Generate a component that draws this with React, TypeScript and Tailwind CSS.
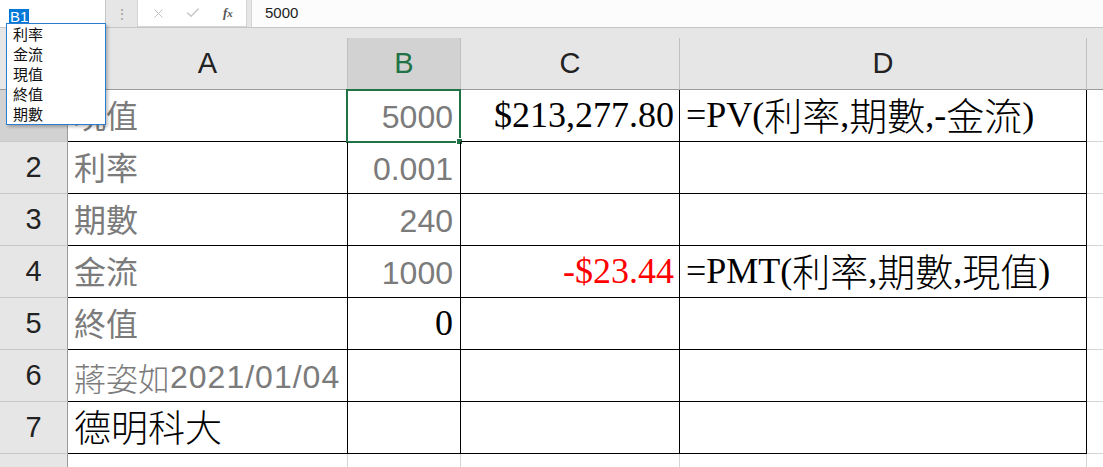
import { X, Check } from 'lucide-react';

/* ─── Sheet data ───────────────────────────────────────────── */

const SANS = "font-['Liberation_Sans','Noto_Sans_CJK_TC',sans-serif]";
const SERIF = "font-['Liberation_Serif','Noto_Sans_CJK_TC',serif]";
const CJK = "font-['Noto_Sans_CJK_TC',sans-serif] font-light";

const columns = ['A', 'B', 'C', 'D'];
const selectedCol = 'B';
const selectedRow = 1;

// 新細明體-ish CJK inside a Times line
function Cj({ children }: { children: React.ReactNode }) {
  return <span className={`${CJK} text-[38px]`}>{children}</span>;
}

type Cell = {
  content?: React.ReactNode;
  align?: 'left' | 'right';
  className?: string;
};

const grayText = `${SANS} text-[32px] text-[#7b7b7b]`;

const rows: Cell[][] = [
  [
    { content: '現值', className: grayText },
    { content: '5000', align: 'right', className: grayText },
    { content: '$213,277.80', align: 'right', className: `${SERIF} text-[36px] text-black` },
    {
      content: (
        <>
          =PV(<Cj>利率</Cj>,<Cj>期數</Cj>,-<Cj>金流</Cj>)
        </>
      ),
      className: `${SERIF} text-[36px] text-black`,
    },
  ],
  [
    { content: '利率', className: grayText },
    { content: '0.001', align: 'right', className: grayText },
    {},
    {},
  ],
  [
    { content: '期數', className: grayText },
    { content: '240', align: 'right', className: grayText },
    {},
    {},
  ],
  [
    { content: '金流', className: grayText },
    { content: '1000', align: 'right', className: grayText },
    { content: '-$23.44', align: 'right', className: `${SERIF} text-[36px] text-[#ff0000]` },
    {
      content: (
        <>
          =PMT(<Cj>利率</Cj>,<Cj>期數</Cj>,<Cj>現值</Cj>)
        </>
      ),
      className: `${SERIF} text-[36px] text-black`,
    },
  ],
  [
    { content: '終值', className: grayText },
    { content: '0', align: 'right', className: `${SERIF} text-[36px] text-black` },
    {},
    {},
  ],
  [
    {
      content: (
        <>
          <span className={`${CJK} text-[32px]`}>蔣姿如</span>
          <span className="tracking-[1px]">2021/01/04</span>
        </>
      ),
      className: grayText,
    },
    {},
    {},
    {},
  ],
  [
    { content: <span className={`${CJK} text-[37px]`}>德明科大</span>, className: 'text-black' },
    {},
    {},
    {},
  ],
];

/* ─── Formula bar ──────────────────────────────────────────── */

function FormulaBar() {
  return (
    <div className="flex h-[28px] bg-[#e6e6e6] border-b border-[#c6c6c6]">
      <div className="w-[106px] bg-white border-r border-[#c6c6c6] pl-[9px] pt-[4px]">
        <span className={`${SANS} bg-[#0078d7] text-white text-[15px] leading-[16px] inline-block px-[1px]`}>B1</span>
      </div>
      <div className="w-[31px] flex items-center justify-center text-[#a0a0a0] text-[14px]">⋮</div>
      <div className="w-[110px] bg-white border border-[#d4d4d4] border-t-0 flex items-center">
        <X size={15} strokeWidth={1.5} className="ml-[13px] text-[#bdbdbd]" />
        <Check size={16} strokeWidth={2} className="ml-[19px] text-[#c4c4c4]" />
        <span className="ml-[22px] font-['Liberation_Serif',serif] italic text-[13px] text-[#555] font-bold">
          f<span className="text-[11px]">x</span>
        </span>
      </div>
      <div className="flex-1 ml-[4px] bg-[#fcfcfc] border-l border-[#d4d4d4] pl-[13px] flex items-center">
        <span className={`${SANS} text-[15px] text-[#222]`}>5000</span>
      </div>
    </div>
  );
}

/* ─── Grid ─────────────────────────────────────────────────── */

function Sheet() {
  return (
    <div className="grid grid-cols-[68px_280px_113px_219px_407px_1fr] auto-rows-[52px]">
      {/* column headers */}
      <div className="bg-[#e6e6e6] border-r border-b border-[#9b9b9b]" />
      {columns.map((c) => (
        <div
          key={c}
          className={`${SANS} flex items-center justify-center text-[29px] border-r border-b border-r-[#c0c0c0] border-b-[#9b9b9b] ${
            c === selectedCol ? 'bg-[#d2d2d2] text-[#217346]' : 'bg-[#e6e6e6] text-[#222]'
          }`}
        >
          {c}
        </div>
      ))}
      <div className="bg-[#e6e6e6] border-b border-[#9b9b9b]" />

      {rows.map((row, ri) => {
        const rowNum = ri + 1;
        return (
          <div key={rowNum} className="contents">
            <div
              className={`${SANS} flex items-center justify-center text-[29px] border-r border-b border-r-[#9b9b9b] border-b-[#c8c8c8] ${
                rowNum === selectedRow ? 'bg-[#d2d2d2] text-[#217346]' : 'bg-[#e6e6e6] text-[#222]'
              }`}
            >
              {rowNum}
            </div>
            {row.map((cell, ci) => {
              const isSel = rowNum === selectedRow && columns[ci] === selectedCol;
              const padRight = columns[ci] === 'C' ? 'justify-end pr-[5px]' : 'justify-end pr-[7px]';
              return (
                <div
                  key={ci}
                  className={`relative flex items-end whitespace-nowrap leading-none border-r border-b border-black pb-[8px] ${
                    cell.align === 'right' ? padRight : 'justify-start pl-[6px]'
                  } ${cell.className ?? ''}`}
                >
                  {cell.content}
                  {isSel && (
                    <div className="absolute -left-[2px] -top-[1px] right-[-1px] bottom-[-2px] border-2 border-[#217346]">
                      <div className="absolute -right-[4px] -bottom-[4px] w-[7px] h-[7px] bg-[#217346] border border-white" />
                    </div>
                  )}
                </div>
              );
            })}
            <div className="border-b border-[#d4d4d4]" />
          </div>
        );
      })}

      {/* row 8, mostly cut off */}
      <div className="bg-[#e6e6e6] border-r border-[#9b9b9b]" />
      <div className="border-r border-[#d4d4d4]" />
      <div className="border-r border-[#d4d4d4]" />
      <div className="border-r border-[#d4d4d4]" />
      <div className="border-r border-[#d4d4d4]" />
      <div />
    </div>
  );
}

/* ─── Name list dropdown ───────────────────────────────────── */

const names = ['利率', '金流', '現值', '終值', '期數'];

function NameList() {
  return (
    <div className="absolute left-[6px] top-[23px] w-[100px] h-[102px] bg-white border border-[#2b7cd3] shadow-[2px_2px_3px_rgba(0,0,0,0.25)] pl-[6px]">
      {names.map((n) => (
        <div key={n} className={`${CJK} font-normal text-[15px] leading-[20px] text-[#111]`}>
          {n}
        </div>
      ))}
    </div>
  );
}

export default function App() {
  return (
    <div className="relative w-[1103px] h-[467px] overflow-hidden bg-white">
      <FormulaBar />
      <div className="h-[10px] bg-[#e6e6e6]" />
      <Sheet />
      <NameList />
    </div>
  );
}
